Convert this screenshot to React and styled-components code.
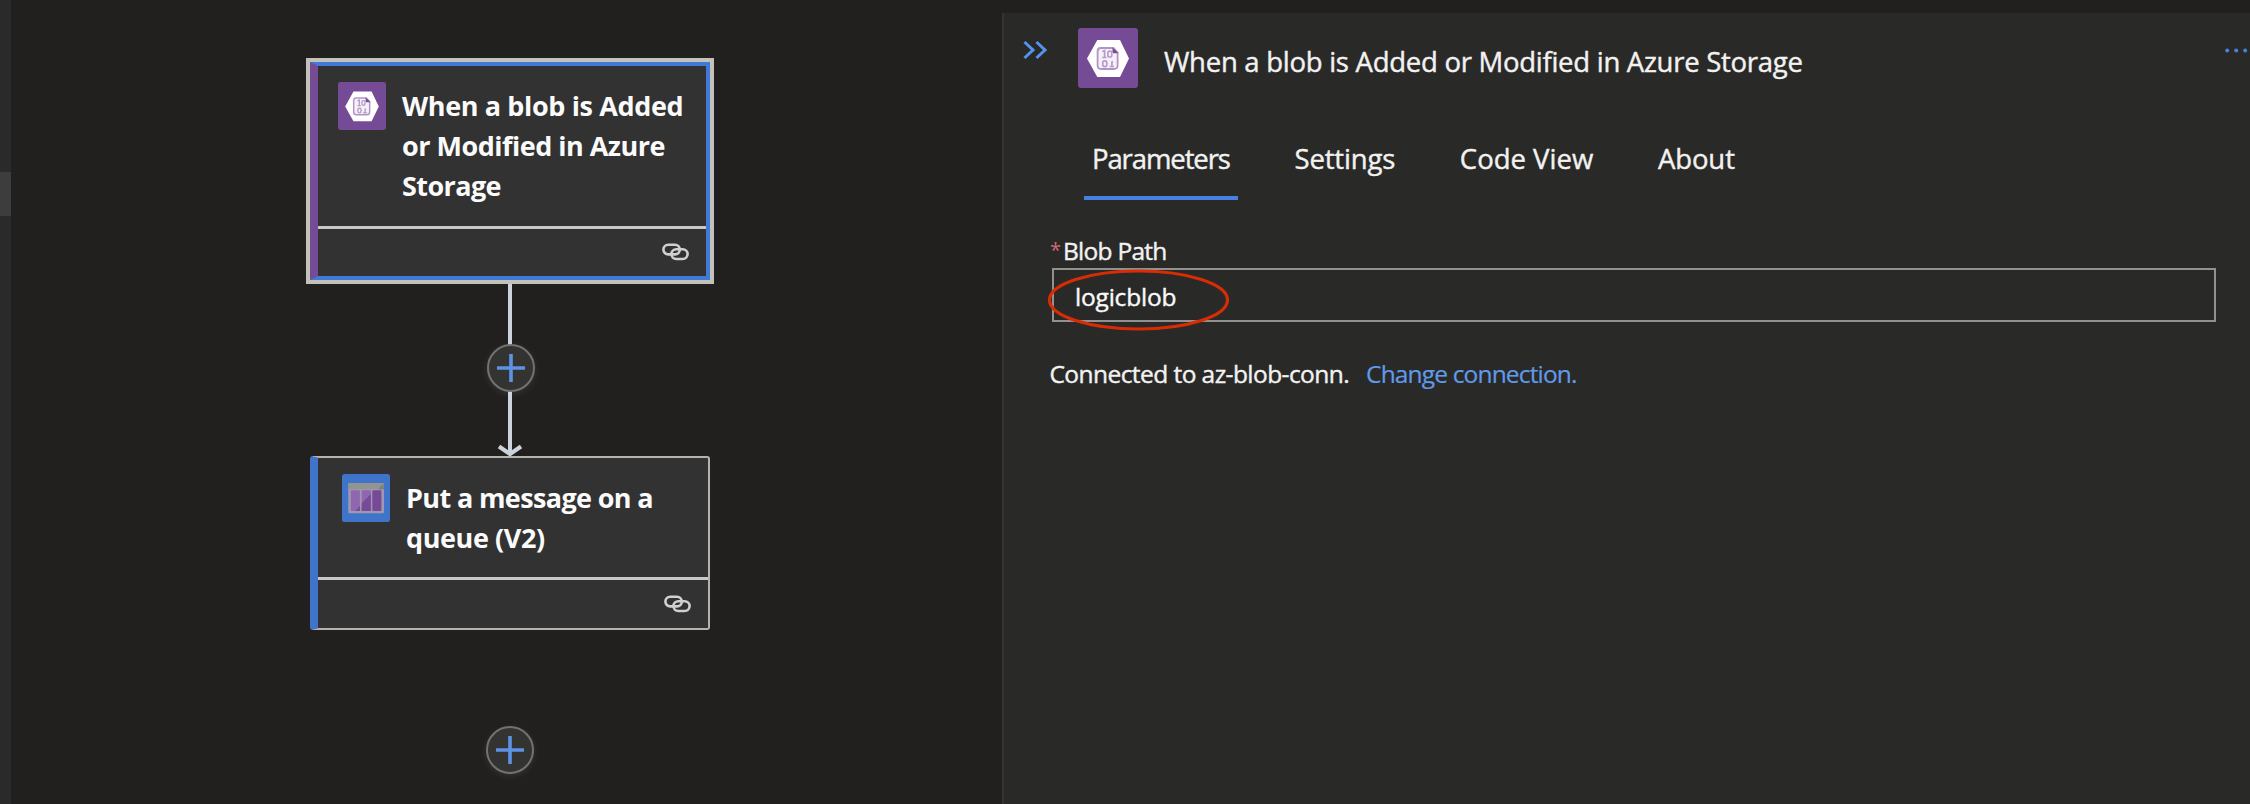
import React from 'react';
import styled, { createGlobalStyle } from 'styled-components';

const GlobalStyle = createGlobalStyle`
  * { box-sizing: border-box; }
  body {
    margin: 0;
    background: #21201e;
    font-family: "Open Sans", "Noto Sans", sans-serif;
    color: #f3f2f1;
  }
  button { font: inherit; color: inherit; padding: 0; background: none; border: 0; }
  svg { display: block; flex: none; }
`;

const Page = styled.div`
  display: flex;
  height: 804px;
  overflow: hidden;
`;

const Rail = styled.aside`
  flex: none;
  width: 10.5px;
  padding-top: 172px;
  background: #2a2a2a;
`;

const RailThumb = styled.div`
  height: 44px;
  background: #3d3d3d;
`;

const Canvas = styled.main`
  flex: none;
  width: 991.5px;
  padding: 62px 0 0 299.5px;
  background: #21201f;
`;

const Flow = styled.div`
  width: 400px;
  display: flex;
  flex-direction: column;
  align-items: center;
`;

const Card = styled.article`
  width: 400px;
  height: ${p => (p.$selected ? 218 : 174)}px;
  display: flex;
  flex-direction: column;
  background: #323232;
  border: ${p => (p.$selected ? '4px solid #4079d8' : '2px solid #b4b3b2')};
  border-left: 8px solid ${p => p.$accent};
  border-radius: ${p => (p.$selected ? 0 : 3)}px;
  outline: ${p => (p.$selected ? '4px solid #c3c2b9' : 'none')};
`;

const CardHeader = styled.div`
  flex: 1;
  display: flex;
  align-items: flex-start;
  gap: 16px;
  padding: 16px 0 0 ${p => (p.$inset ? 24 : 20)}px;
`;

const CardTitle = styled.h2`
  margin: 4px 0 0;
  font-size: 27px;
  font-weight: 700;
  line-height: 40px;
  color: #fbfbfb;
`;

const Line = styled.span`
  display: block;
  white-space: nowrap;
  letter-spacing: ${p => p.$track}px;
`;

const CardFooter = styled.div`
  height: ${p => (p.$selected ? 50 : 51)}px;
  display: flex;
  align-items: center;
  justify-content: flex-end;
  padding: 0 17px 1px 0;
  border-top: 3px solid #c9c8c6;
`;

const Edge = styled.div`
  position: relative;
  width: 400px;
  height: 176px;
  display: flex;
  justify-content: center;
  padding: 4px 0 0;
`;

const AddButton = styled.button`
  width: 48px;
  height: 48px;
  display: flex;
  align-items: center;
  justify-content: center;
  border: 2px solid #737271;
  border-radius: 50%;
  background: #333332;
  box-shadow: 0 2px 7px rgba(255, 255, 255, 0.09);
`;

const EdgeButton = styled(AddButton)`
  position: absolute;
  left: 177px;
  top: 64px;
`;

const TailButton = styled(AddButton)`
  margin-top: 96px;
`;

const Panel = styled.section`
  flex: 1;
  margin-top: 12.5px;
  padding-top: 15px;
  background: #292928;
  border-left: 2px solid #343433;
  -webkit-text-stroke: 0.4px currentColor;
`;

const PanelHeader = styled.header`
  display: flex;
  align-items: center;
  height: 60px;
  padding: 0 3px 0 19px;
`;

const CollapseButton = styled.button`
  align-self: flex-start;
  width: 55px;
  height: 45px;
  display: flex;
  align-items: center;
`;

const PanelTitle = styled.h1`
  flex: 1;
  margin: 9px 0 0 26px;
  font-size: 27.5px;
  font-weight: 500;
  line-height: 36px;
  letter-spacing: -0.27px;
  white-space: nowrap;
`;

const MoreButton = styled.button`
  align-self: flex-start;
  height: 45px;
  display: flex;
  align-items: center;
`;

const Tabs = styled.nav`
  display: flex;
  gap: 48.7px;
  margin: 51px 0 0 80px;
`;

const Tab = styled.button`
  height: 61.5px;
  padding: 1px 8px 18.5px;
  font-size: 27.5px;
  font-weight: 500;
  line-height: 38px;
  white-space: nowrap;
  letter-spacing: ${p => p.$track}px;
  border-bottom: 4px solid ${p => (p.$active ? '#4880e0' : 'transparent')};
`;

const Body = styled.div`
  padding: 33.5px 34.5px 0 46px;
  font-size: 24.5px;
  font-weight: 500;
  line-height: 34px;
`;

const FieldLabel = styled.label`
  display: flex;
  align-items: flex-start;
  height: 34px;
  letter-spacing: -0.74px;
`;

const Required = styled.span`
  width: 13px;
  font-size: 20px;
  line-height: 31px;
  color: #cf6a72;
  -webkit-text-stroke: 0;
`;

const FieldBox = styled.div`
  position: relative;
  height: 54px;
  margin-left: 2px;
  padding: 2px 0 0 21px;
  line-height: 50px;
  letter-spacing: -0.2px;
  border: 2px solid #929190;
  color: #fafafa;
`;

const Highlight = styled.svg`
  position: absolute;
  left: -7px;
  top: -1px;
`;

const Connection = styled.p`
  display: flex;
  gap: 17px;
  margin: 35.5px 0 0 -0.5px;
  letter-spacing: -0.56px;
  white-space: nowrap;
`;

const ChangeLink = styled.a`
  font-weight: 400;
  letter-spacing: -0.84px;
  color: #619ae8;
  -webkit-text-stroke: 0.2px currentColor;
`;

function BlobIcon({ size }) {
  return (
    <svg width={size} height={size} viewBox="0 0 60 60">
      <rect width="60" height="60" rx="3" fill="#764b95" />
      <path d="M19.3 12H42L51 30.5 42 49H19.3L9 30.5Z" fill="#fff" />
      <path
        d="M22.5 20H35.5L39.6 24.5V37.5Q39.6 41 36 41H23Q19.6 41 19.6 37.5V23.5Q19.6 20 22.5 20Z"
        fill="#f6f1f9" stroke="#b294c5" strokeWidth="1.8"
      />
      <path d="M34.5 19.5 40.5 25.3H36Q34.5 25.3 34.5 24Z" fill="#764b95" />
      <g fill="none" stroke="#b79ccb" strokeWidth="1.7">
        <path d="M24.3 23.5 26.6 22.5V29.5M24.3 29.5H28.5M35 33.5 33.2 34.5M33.9 33.5V38.5M31.7 38.5H36" />
        <rect x="29.9" y="23.2" width="3.9" height="5.8" rx="1.8" />
        <rect x="24.8" y="32.8" width="4" height="5.8" rx="1.8" />
      </g>
    </svg>
  );
}

function QueueIcon() {
  return (
    <svg width="48" height="48" viewBox="0 0 48 48">
      <rect width="48" height="48" rx="2.5" fill="#4074ca" />
      <rect x="6.3" y="9" width="35.7" height="30.3" rx="1.2" fill="#a099ad" />
      <path d="M6.3 10.2Q6.3 9 7.5 9H40.8Q42 9 42 10.2V15.3H6.3Z" fill="#929493" />
      <path d="M36 15.3 41.5 9.5 42 15.3Z" fill="#7e817f" />
      <rect x="8.8" y="16.2" width="9.1" height="20.8" rx="0.8" fill="#8f66af" />
      <rect x="19.7" y="16.2" width="9.1" height="20.8" rx="0.8" fill="#8f66af" />
      <rect x="30.3" y="16.2" width="9.1" height="20.8" rx="0.8" fill="#774a99" />
      <path d="M28.8 20V37H19.7V29.5ZM17.9 32V37H13.3Z" fill="#774a99" />
    </svg>
  );
}

function LinkIcon() {
  return (
    <svg width="27" height="18" viewBox="0 0 27 18" fill="none" stroke="#d0d0cf" strokeWidth="2.6">
      <rect x="1.4" y="1.8" width="16.4" height="9.6" rx="4.8" />
      <rect x="9.4" y="6.2" width="16.2" height="9.8" rx="4.9" />
    </svg>
  );
}

function PlusIcon() {
  return (
    <svg width="28" height="28" viewBox="0 0 28 28">
      <path d="M14 0V28M0 14H28" stroke="#5c93e4" strokeWidth="3.6" />
    </svg>
  );
}

function Arrow() {
  return (
    <svg width="28" height="172" viewBox="0 0 28 172" fill="none" stroke="#cdd3dc">
      <path d="M14 0V171" strokeWidth="4" />
      <path d="M3 162.5 14 170 25 162.5" strokeWidth="4.2" />
    </svg>
  );
}

const TABS = [
  { label: 'Parameters', track: -1.1, active: true },
  { label: 'Settings', track: -0.17 },
  { label: 'Code View', track: 0 },
  { label: 'About', track: -0.1 },
];

export default function App() {
  return (
    <>
      <GlobalStyle />
      <Page>
        <Rail><RailThumb /></Rail>
        <Canvas>
          <Flow>
            <Card $selected $accent="#764b95">
              <CardHeader>
                <BlobIcon size={48} />
                <CardTitle>
                  <Line $track={-0.36}>When a blob is Added</Line>
                  <Line $track={-0.5}>or Modified in Azure</Line>
                  <Line $track={-0.6}>Storage</Line>
                </CardTitle>
              </CardHeader>
              <CardFooter $selected><LinkIcon /></CardFooter>
            </Card>
            <Edge>
              <Arrow />
              <EdgeButton aria-label="Insert step"><PlusIcon /></EdgeButton>
            </Edge>
            <Card $accent="#4074ca">
              <CardHeader $inset>
                <QueueIcon />
                <CardTitle>
                  <Line $track={-0.63}>Put a message on a</Line>
                  <Line $track={-0.4}>queue (V2)</Line>
                </CardTitle>
              </CardHeader>
              <CardFooter><LinkIcon /></CardFooter>
            </Card>
            <TailButton aria-label="Add step"><PlusIcon /></TailButton>
          </Flow>
        </Canvas>
        <Panel>
          <PanelHeader>
            <CollapseButton aria-label="Collapse">
              <svg width="25" height="20" viewBox="0 0 25 20" fill="none" stroke="#5394ee" strokeWidth="3">
                <path d="M1.5 2 10 10 1.5 18M13.5 2 22 10 13.5 18" />
              </svg>
            </CollapseButton>
            <BlobIcon size={60} />
            <PanelTitle>When a blob is Added or Modified in Azure Storage</PanelTitle>
            <MoreButton aria-label="More">
              <svg width="22" height="5" viewBox="0 0 22 5" fill="#4b83d2">
                <circle cx="2.2" cy="2.5" r="2" />
                <circle cx="11.2" cy="2.5" r="2" />
                <circle cx="20.2" cy="2.5" r="2" />
              </svg>
            </MoreButton>
          </PanelHeader>
          <Tabs>
            {TABS.map(t => (
              <Tab key={t.label} $track={t.track} $active={t.active}>{t.label}</Tab>
            ))}
          </Tabs>
          <Body>
            <FieldLabel><Required>*</Required>Blob Path</FieldLabel>
            <FieldBox>
              logicblob
              <Highlight width="190" height="66" viewBox="0 0 190 66" fill="none">
                <ellipse cx="91.5" cy="31" rx="89" ry="29" stroke="#d82c04" strokeWidth="3.2" />
              </Highlight>
            </FieldBox>
            <Connection>
              <span>Connected to az-blob-conn.</span>
              <ChangeLink>Change connection.</ChangeLink>
            </Connection>
          </Body>
        </Panel>
      </Page>
    </>
  );
}
